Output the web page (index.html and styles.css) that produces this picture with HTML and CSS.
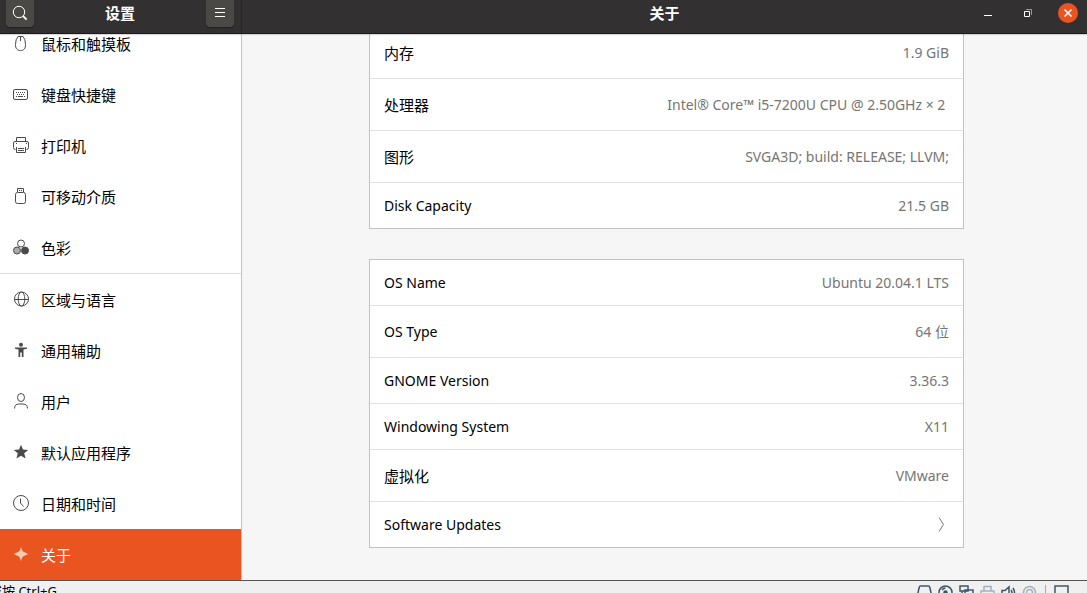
FILE: index.html
```html
<!DOCTYPE html>
<html lang="zh-CN">
<head>
<meta charset="utf-8">
<title>设置</title>
<link rel="stylesheet" href="styles.css">
</head>
<body>
<header class="titlebar">
  <div class="titlebar-side">
    <button class="tool" aria-label="搜索"><svg width="16" height="16" viewBox="0 0 16 16"><circle cx="7" cy="7" r="5.7"/><path d="M11 11l3.6 3.6" stroke-width="1.8"/></svg></button>
    <h1 class="title">设置</h1>
    <button class="tool" aria-label="菜单"><svg width="16" height="16" viewBox="0 0 16 16"><path d="M3 3.500h10M3 7.500h10M3 11.500h10"/></svg></button>
  </div>
  <div class="titlebar-main">
    <h2 class="title">关于</h2>
    <div class="controls">
      <button class="control" aria-label="最小化"><svg width="16" height="16" viewBox="0 0 16 16"><path d="M4 10.500h8"/></svg></button>
      <button class="control" aria-label="还原"><svg width="16" height="16" viewBox="0 0 16 16"><path d="M4.500 6.500h5v5h-5z"/><path d="M6 4.500h5.500v5.500" opacity=".5"/></svg></button>
      <button class="control close" aria-label="关闭"><svg width="16" height="16" viewBox="0 0 16 16"><path d="M4.500 4.500l7 7M11.500 4.500l-7 7" stroke-width="1.6"/></svg></button>
    </div>
  </div>
</header>
<div class="workspace">
  <nav class="sidebar">
    <a class="item" href="#mouse"><svg class="icon" viewBox="0 0 16 16"><path d="M5 1.500h5Q12.500 4 12.500 9.500C12.500 13.500 11 15.500 7.500 15.500S2.500 13.500 2.500 9.500Q2.500 4 5 1.500zM7.500 2v4"/></svg>鼠标和触摸板</a>
    <a class="item" href="#keyboard"><svg class="icon" viewBox="0 0 16 16"><rect x=".5" y="3.500" width="14" height="10" rx="1.500"/><path d="M3 6.500h10M4 8.500h8" stroke-dasharray="1 1"/><path d="M3 10.500h1M5 10.500h5M11 10.500h1"/></svg>键盘快捷键</a>
    <a class="item" href="#printers"><svg class="icon" viewBox="0 0 16 16"><path d="M3.500 4V.5h9V4M2.500 12.500Q.5 12.500 .5 10.500V6Q.5 4.500 2 4.500h12Q15.500 4.500 15.500 6v4.500q0 2-2 2M3.500 10v5.500h9V10M5 11.500h6M5 13.500h6M3 6.500h1M13 6.500h1"/></svg>打印机</a>
    <a class="item" href="#media"><svg class="icon" viewBox="0 0 16 16"><path d="M4.500 4V.5h6V4M6 2.500h1M8 2.500h1"/><rect x="2.500" y="4.500" width="10" height="11" rx="2"/></svg>可移动介质</a>
    <a class="item" href="#color"><svg class="icon" viewBox="0 0 16 16"><circle cx="8" cy="4.500" r="3.500"/><circle cx="4" cy="11.500" r="3.500" fill="#aaa"/><circle cx="12" cy="11.500" r="3.500" fill="#4a4a4a"/></svg>色彩</a>
    <hr class="rule">
    <a class="item" href="#region"><svg class="icon" viewBox="0 0 16 16"><circle cx="8.500" cy="8" r="7"/><ellipse cx="8.500" cy="8" rx="3.300" ry="7"/><path d="M1.500 8.500h14"/></svg>区域与语言</a>
    <a class="item" href="#access"><svg class="icon solid" viewBox="0 0 16 16"><circle cx="8" cy="2.800" r="2"/><path d="M2 5.500h12v1.300l-3.500.8V15H8.800v-4.500H7.200V15H5.500V7.600L2 6.800z"/></svg>通用辅助</a>
    <a class="item" href="#users"><svg class="icon" viewBox="0 0 16 16"><ellipse cx="8" cy="4.500" rx="3.500" ry="4"/><path d="M1.500 15.500Q1.500 11 6 11h4q4.500 0 4.500 4.500"/></svg>用户</a>
    <a class="item" href="#defaults"><svg class="icon solid" viewBox="0 0 16 16"><path d="M8 .8l2 4.700 5.200.4-4 3.400L12.600 14.500 8 11.700 3.400 14.500l1.400-5.200-4-3.400L6 5.500z"/></svg>默认应用程序</a>
    <a class="item" href="#datetime"><svg class="icon" viewBox="0 0 16 16"><circle cx="8" cy="8" r="7.500"/><path d="M7.500 3.500V8l3 3.500"/></svg>日期和时间</a>
    <a class="item selected" href="#about" aria-current="page"><svg class="icon solid" viewBox="0 0 16 16"><path d="M8 .8Q9 5 10.500 5.700L15.200 8l-4.700 2.300Q9 11 8 15.200 7 11 5.500 10.300L.8 8l4.700-2.300Q7 5 8 .8z"/></svg>关于</a>
  </nav>
  <main class="content">
    <dl class="panel">
      <div class="row tall"><dt class="cjk">内存</dt><dd>1.9 GiB</dd></div>
      <div class="row tall"><dt class="cjk">处理器</dt><dd class="spaced">Intel® Core™ i5-7200U CPU @ 2.50GHz × 2 </dd></div>
      <div class="row tall"><dt class="cjk">图形</dt><dd>SVGA3D; build: RELEASE; LLVM;</dd></div>
      <div class="row"><dt>Disk Capacity</dt><dd>21.5 GB</dd></div>
    </dl>
    <div class="panel">
      <dl class="group">
        <div class="row"><dt>OS Name</dt><dd>Ubuntu 20.04.1 LTS</dd></div>
        <div class="row tall"><dt>OS Type</dt><dd>64 位</dd></div>
        <div class="row"><dt>GNOME Version</dt><dd>3.36.3</dd></div>
        <div class="row"><dt>Windowing System</dt><dd>X11</dd></div>
        <div class="row tall"><dt class="cjk">虚拟化</dt><dd>VMware</dd></div>
      </dl>
      <button class="row">Software Updates<svg width="16" height="16" viewBox="0 0 16 16"><path d="M6 .5l4.500 7-4.500 7"/></svg></button>
    </div>
  </main>
</div>
<footer class="statusbar">
  <span class="hint">或按 Ctrl+G</span>
  <div class="devices">
    <svg viewBox="0 0 15 14"><path d="M3.500 1h8q1 0 1.200 1L14.300 9v4H.7V9l1.600-7q.2-1 1.200-1z"/></svg>
    <svg viewBox="0 0 15 14"><circle cx="7.500" cy="7.500" r="6.500"/><path d="M4 5q1.500-2 3.500-2"/><circle cx="7.500" cy="7.500" r="1.500" fill="#3f5568"/></svg>
    <svg viewBox="0 0 15 14"><path d="M1 1h8v5H1zM6 5h8v7H6zM3 6v4h2"/></svg>
    <svg class="off" viewBox="0 0 15 14"><path d="M4 6V1.500h7V6M1 12V6h13v6z"/></svg>
    <svg viewBox="0 0 15 14"><path d="M1 5.500h3L8 2v11L4 9.500H1z"/><path d="M10 5q2 2.500 0 5M12 3q3 4.500 0 9"/></svg>
    <svg class="off" viewBox="0 0 15 14"><circle cx="7.500" cy="7.500" r="6"/><circle cx="7.500" cy="7.500" r="3"/></svg>
    <span class="divider"></span>
    <svg viewBox="0 0 15 14"><path d="M1 1h13v12H1z"/></svg>
  </div>
</footer>
</body>
</html>
```
FILE: styles.css
```css
* { box-sizing: border-box; }
body {
  display: flex;
  flex-direction: column;
  height: 100vh;
  margin: 0;
  overflow: hidden;
  background: #f6f6f6;
  color: #000;
  font: 14px/20px "Noto Sans", "Noto Sans CJK SC", sans-serif;
}
button { border: 0; font: inherit; color: inherit; }
svg { flex: none; fill: none; stroke: currentColor; }
dl, dd { margin: 0; }

.titlebar {
  display: flex;
  flex: none;
  height: 34px;
  background: #333031;
  border-bottom: 1px solid #1c1a1b;
  box-shadow: 0 1px 1px #00000026;
  color: #fff;
  z-index: 1;
}
.titlebar-side {
  display: flex;
  align-items: flex-start;
  justify-content: space-between;
  width: 242px;
  padding: 0 7px 0 6px;
  border-right: 1px solid #272525;
}
.titlebar-main {
  display: grid;
  grid-template-columns: 1fr auto 1fr;
  align-items: start;
  flex: 1;
  padding: 0 9px;
}
.titlebar-main .title { grid-column: 2; }
.title {
  margin: 0;
  padding-top: 3px;
  font: bold 15px/20px "Noto Sans CJK SC", sans-serif;
}
.tool {
  display: grid;
  justify-items: center;
  align-items: start;
  width: 28px;
  height: 27px;
  padding: 5px 0 0;
  border-radius: 0 0 4px 4px;
  background: #4b4946;
  box-shadow: 0 1px 1px #222;
}
.controls { display: flex; justify-content: flex-end; gap: 20px; padding-top: 3px; }
.control {
  display: grid;
  place-items: center;
  width: 20px;
  height: 20px;
  padding: 0;
  background: none;
}
.close { border-radius: 50%; background: #e95420; }

.workspace { display: flex; flex: 1; min-height: 0; }
.sidebar {
  display: flex;
  flex-direction: column;
  justify-content: flex-end;
  flex: none;
  width: 242px;
  overflow: hidden;
  background: #fff;
  border-right: 1px solid #c2c2c2;
}
.item {
  display: flex;
  align-items: center;
  flex: none;
  gap: 12px;
  height: 51px;
  padding: 0 13px;
  color: #000;
  font: 15px/20px "Noto Sans CJK SC", sans-serif;
  text-decoration: none;
}
.icon { width: 16px; height: 16px; margin-bottom: 2px; color: #4a4a4a; }
.solid { fill: currentColor; stroke: none; }
.selected { background: #e95420; color: #fff; }
.selected .icon { color: #fac9b8; }
.rule { flex: none; width: 100%; height: 1px; margin: 0; border: 0; background: #e0e0e0; }

.content {
  display: flex;
  flex-direction: column;
  justify-content: flex-end;
  align-items: center;
  flex: 1;
  gap: 30px;
  padding: 0 0 32px 4px;
  overflow: hidden;
}
.panel {
  flex: none;
  width: 100%;
  max-width: 595px;
  background: #fff;
  border: 1px solid #c2c2c2;
}
.row {
  display: flex;
  align-items: center;
  justify-content: space-between;
  width: 100%;
  height: 46px;
  padding: 0 14px;
  border-bottom: 1px solid #e2e2e2;
  background: none;
}
.tall { height: 52px; }
.panel > .row:last-child { height: 45px; border-bottom: 0; }
.row .cjk { font: 15px/20px "Noto Sans CJK SC", sans-serif; }
.row dd { color: #757575; }
.row svg { color: #777; }
.spaced { white-space: pre; }

.statusbar {
  display: flex;
  justify-content: space-between;
  flex: none;
  height: 13px;
  padding: 4px 18px 0 0;
  overflow: hidden;
  border-top: 1px solid #555;
  background: #f0f0f0;
}
.hint { text-indent: -11px; font-size: 13px; line-height: 12px; white-space: nowrap; }
.devices { display: flex; gap: 6px; color: #3f5568; }
.devices svg { width: 15px; height: 14px; stroke-width: 1.5; }
.devices .off { color: #a5b0ba; }
.divider { width: 1px; height: 14px; margin: 0 2px; background: #aaa; }
```
